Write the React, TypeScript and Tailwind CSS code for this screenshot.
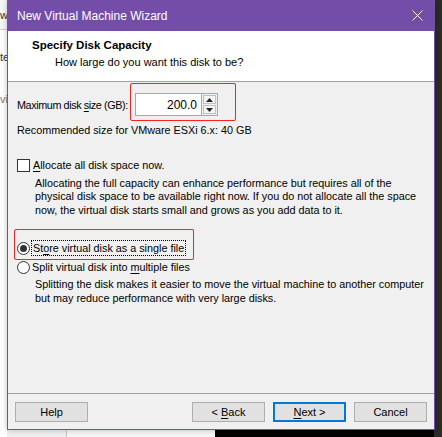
import React from 'react';

const ui = { fontFamily: '"Liberation Sans", Arial, sans-serif' };

function Under({ children }: { children: React.ReactNode }) {
  return <span className="underline underline-offset-[2px]">{children}</span>;
}

function WizardButton({ children, primary }: { children: React.ReactNode; primary?: boolean }) {
  return (
    <button
      type="button"
      className={
        primary
          ? 'flex h-[20px] w-[73px] items-center justify-center border-2 border-[#0078d7] bg-[#e1e1e1] text-[11px] text-black'
          : 'flex h-[20px] w-[73px] items-center justify-center border border-[#adadad] bg-[#e1e1e1] text-[11px] text-black'
      }
    >
      <span className="whitespace-pre">{children}</span>
    </button>
  );
}

export default function App() {
  return (
    <div className="relative h-[437px] w-[442px] overflow-hidden bg-[#f0f0f0]" style={ui}>
      {/* window behind, left edge */}
      <div className="absolute left-0 top-0 flex h-full w-[7px] flex-col overflow-hidden bg-white text-[11px] text-[#333]">
        <div className="h-[30px] border-b border-[#d0d0d0] bg-[#f7f7f7] pt-[8px] leading-[14px]">w</div>
        <div className="pt-[20px] leading-[14px]">te</div>
        <div className="pt-[28px] leading-[14px] text-[#777]">vi</div>
      </div>
      {/* desktop behind, right and bottom */}
      <div className="absolute right-0 top-0 h-full w-[8px] bg-[#2b2b2b]" />
      <div className="absolute bottom-0 left-[7px] flex h-[8px] w-[427px]">
        <div className="w-[60px] border-r border-[#c8c8c8] bg-[#f0f0f0]" />
        <div className="w-[148px] bg-[#f7f7f7]" />
        <div className="flex-1 bg-black" />
      </div>

      {/* dialog */}
      <div className="absolute left-[7px] top-0 flex h-[430px] w-[428px] flex-col border-x border-b border-[#7350a6] bg-[#f0f0f0] shadow-[0_0_6px_rgba(0,0,0,0.25)]">
        <div className="flex h-[31px] shrink-0 items-center justify-between bg-[#744da9] pl-[9px] pr-[10px] text-[12px] text-white">
          <span>New Virtual Machine Wizard</span>
          <svg width="11" height="11" viewBox="0 0 11 11" className="mr-[1px]">
            <path d="M0.5 0.5 L10.5 10.5 M10.5 0.5 L0.5 10.5" stroke="white" strokeWidth="1" fill="none" />
          </svg>
        </div>

        <div className="flex h-[51px] shrink-0 flex-col border-b border-[#a0a0a0] bg-white pt-[7px]">
          <div className="pl-[24px] text-[11.5px] font-bold leading-[14px] text-black">Specify Disk Capacity</div>
          <div className="mt-[3px] pl-[47px] text-[11px] leading-[14px] text-black">How large do you want this disk to be?</div>
        </div>

        <div className="relative flex flex-1 flex-col whitespace-nowrap pl-[9px] pr-[6px] text-[10.8px] leading-[14px] text-black">
          <div className="mt-[11px] flex items-center">
            <span className="w-[118px] tracking-[-0.4px]">
              Maximum disk <Under>s</Under>ize (GB):
            </span>
            <div className="flex h-[23px] w-[67px] items-center justify-end border border-[#a8a8a8] bg-white pr-[4px] text-[12px]">
              200.0
            </div>
            <div className="flex h-[23px] w-[16px] flex-col gap-[1px] border border-l-0 border-[#a8a8a8] bg-[#f0f0f0] p-[1px]">
              <div className="flex flex-1 items-center justify-center border border-[#c0c0c0] bg-[#f5f5f5]">
                <svg width="7" height="4" viewBox="0 0 7 4">
                  <path d="M3.5 0 L7 4 L0 4 Z" fill="#222" />
                </svg>
              </div>
              <div className="flex flex-1 items-center justify-center border border-[#c0c0c0] bg-[#f5f5f5]">
                <svg width="7" height="4" viewBox="0 0 7 4">
                  <path d="M0 0 L7 0 L3.5 4 Z" fill="#222" />
                </svg>
              </div>
            </div>
          </div>

          <div className="mt-[7px]">Recommended size for VMware ESXi 6.x: 40 GB</div>

          <label className="mt-[21px] flex items-center gap-[3px]">
            <span className="h-[13px] w-[13px] border border-[#333] bg-white" />
            <span>
              <Under>A</Under>llocate all disk space now.
            </span>
          </label>
          <p className="mt-[5px] pl-[18px] leading-[13.4px]">
            Allocating the full capacity can enhance performance but requires all of the
            <br />
            physical disk space to be available right now. If you do not allocate all the space
            <br />
            now, the virtual disk starts small and grows as you add data to it.
          </p>

          <label className="mt-[23px] flex h-[16px] items-center gap-[1px]">
            <span className="flex h-[13px] w-[13px] items-center justify-center rounded-full border border-[#333] bg-white">
              <span className="h-[7px] w-[7px] rounded-full bg-[#333]" />
            </span>
            <span className="border border-dotted border-black px-[1px] leading-[14px]">
              St<Under>o</Under>re virtual disk as a single file
            </span>
          </label>
          <label className="mt-[3px] flex h-[16px] items-center gap-[2px]">
            <span className="h-[13px] w-[13px] rounded-full border border-[#333] bg-white" />
            <span>
              Split virtual disk into <Under>m</Under>ultiple files
            </span>
          </label>
          <p className="mt-[3px] pl-[18px] leading-[13.4px]">
            Splitting the disk makes it easier to move the virtual machine to another computer
            <br />
            but may reduce performance with very large disks.
          </p>

          {/* annotation boxes */}
          <div className="pointer-events-none absolute left-[122px] top-[1px] h-[38px] w-[106px] rounded-[2px] border-[1.5px] border-[#ff2020]" />
          <div className="pointer-events-none absolute left-[6px] top-[147px] h-[31px] w-[180px] rounded-[2px] border-[1.5px] border-[#ff2020]" />
        </div>

        <div className="flex shrink-0 items-center justify-between border-t border-[#a0a0a0] px-[7px] pb-[7px] pt-[8px]">
          <WizardButton>Help</WizardButton>
          <div className="flex gap-[8px]">
            <WizardButton>
              {'< '}
              <Under>B</Under>ack
            </WizardButton>
            <WizardButton primary>
              <Under>N</Under>
              {'ext >'}
            </WizardButton>
            <WizardButton>Cancel</WizardButton>
          </div>
        </div>
      </div>
    </div>
  );
}
